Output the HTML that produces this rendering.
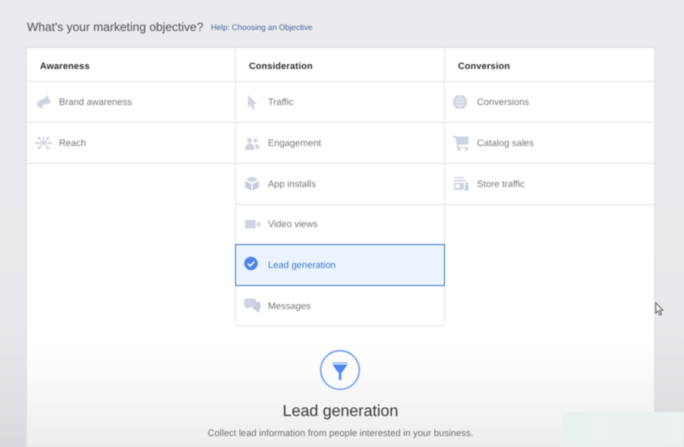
<!DOCTYPE html>
<html>
<head>
<meta charset="utf-8">
<style>
html,body{margin:0;padding:0}
body{width:684px;height:447px;overflow:hidden;position:relative;background:linear-gradient(180deg,#e9ebee 0,#e8e9ec 320px,#d9dadd 447px);font-family:"Liberation Sans",sans-serif;text-rendering:geometricPrecision}
#wrap{position:absolute;left:0;top:0;width:684px;height:447px;filter:blur(.45px)}
.a{position:absolute;white-space:nowrap}
#card{position:absolute;left:27px;top:48px;width:627px;height:399px;background:#fff;box-shadow:0 0 0 1px #dfe0e3}
#fade{position:absolute;left:27px;top:345px;width:627px;height:102px;background:linear-gradient(180deg,#fff 0,#eeeeee 100%)}
.h{background:#e6e7ea;position:absolute}
.t{font-size:9.4px;color:#75777c;line-height:14px}
.b{font-size:9.2px;font-weight:bold;color:#2b2d31;line-height:14px;letter-spacing:.15px}
svg{position:absolute;overflow:visible}
</style>
</head>
<body>
<div id="wrap">
<div class="a" style="left:27px;top:18px;font-size:12px;line-height:18px;color:#4b4f56">What's your marketing objective?</div>
<div class="a" style="left:211px;top:21px;font-size:8px;line-height:14px;color:#4a609c">Help: Choosing an Objective</div>

<div id="card"></div>
<div id="fade"></div>

<div class="h" style="left:27px;top:81px;width:627px;height:1px"></div>
<div class="h" style="left:27px;top:122px;width:627px;height:1px"></div>
<div class="h" style="left:27px;top:163px;width:627px;height:1px"></div>
<div class="h" style="left:235px;top:204px;width:419px;height:1px"></div>
<div class="h" style="left:235px;top:325px;width:210px;height:1px"></div>
<div class="h" style="left:235px;top:48px;width:1px;height:278px"></div>
<div class="h" style="left:444px;top:48px;width:1px;height:278px"></div>

<div class="a" style="left:235px;top:244px;width:208px;height:40px;background:#ebf3fc;border:1px solid #3f7cc8"></div>

<div class="a b" style="left:40px;top:58.500px">Awareness</div>
<div class="a b" style="left:249px;top:58.500px">Consideration</div>
<div class="a b" style="left:458px;top:58.500px">Conversion</div>

<div class="a t" style="left:59px;top:95px">Brand awareness</div>
<div class="a t" style="left:59px;top:136px">Reach</div>
<div class="a t" style="left:268px;top:95px">Traffic</div>
<div class="a t" style="left:268px;top:136px">Engagement</div>
<div class="a t" style="left:268px;top:177px">App installs</div>
<div class="a t" style="left:268px;top:217px">Video views</div>
<div class="a t" style="left:268px;top:258px;color:#3b78d0">Lead generation</div>
<div class="a t" style="left:268px;top:299px">Messages</div>
<div class="a t" style="left:477px;top:95px">Conversions</div>
<div class="a t" style="left:477px;top:136px">Catalog sales</div>
<div class="a t" style="left:477px;top:177px">Store traffic</div>

<svg style="left:0;top:0" width="684" height="447" fill="#d0d3e1">
<!-- Brand awareness -->
<path d="M37 102 L45 98 L47.500 95 L51 103.500 L47 104 L42.500 105 L43 107.500 L39.500 108.500 L38.500 106 L37 106Z"/>
<!-- Reach -->
<path d="M43.500 143 L39 138.500 M43.500 143 L48 138.500 M43.500 143 L39 148 M43.500 143 L48 148 M38 143 L49 143 M43.500 143 L43.500 137" fill="none" stroke="#d0d3e1" stroke-width="1.200"/>
<circle cx="43.500" cy="143" r="1.500"/><circle cx="37" cy="143" r="1.400"/><circle cx="50" cy="143" r="1.400"/><circle cx="39" cy="138" r="1.400"/><circle cx="48" cy="138" r="1.400"/><circle cx="39" cy="148" r="1.400"/><circle cx="48" cy="148" r="1.400"/>
<!-- Traffic -->
<path d="M248 95 L257 104 L253 104.500 L255 109 L252.500 109.500 L250.500 105 L248 108Z"/>
<!-- Engagement -->
<circle cx="249.500" cy="140.500" r="2.500"/><circle cx="255.500" cy="140.500" r="2"/>
<path d="M245 150 C245 145 248 143.500 250 143.500 C253 143.500 254.500 145.500 254.500 150Z"/>
<path d="M255.500 144 C258 144 259.500 145.500 259.500 149 L255.800 149 C255.800 147 255.500 145 254.500 144.500Z"/>
<path d="M246 136.500h1.500M249 136.500h1.500M252 136.500h1.500M255 136.500h1.500" stroke="#dcdfe9" stroke-width=".8"/>
<!-- App installs -->
<path d="M252 176.500 L258.500 179.500 L252 182.500 L245.500 179.500Z"/>
<path d="M245 181 L251.300 184 L251.300 190.500 L245 187.500Z" fill="#c6cadb"/>
<path d="M259 181 L252.700 184 L252.700 190.500 L259 187.500Z" fill="#c6cadb"/>
<!-- Video -->
<rect x="245" y="220" width="10.500" height="8.500"/>
<path d="M256 224 L260 221 L260 228 Z"/>
<!-- Messages -->
<rect x="253" y="302" width="7.500" height="8" rx="2.500" fill="#c6cadb"/>
<path d="M254 309 H259 V313 Z" fill="#c6cadb"/>
<rect x="244" y="298.500" width="12.500" height="9" rx="2.800" fill="#d0d3e1"/>
<path d="M246 306 H250 L247 309.500 Z"/>
<!-- Conversions -->
<circle cx="460" cy="102" r="7" fill="#d0d3e1"/>
<g fill="none" stroke="#eef0f6" stroke-width=".7">
<circle cx="460" cy="102" r="6.300" stroke="#b9bed3"/>
<ellipse cx="460" cy="102" rx="3" ry="6.500"/>
<path d="M453.500 102H466.500M454.500 98.500H465.500M454.500 105.500H465.500M460 95.500V108.500"/>
</g>
<!-- Catalog -->
<path d="M453 135.500 L458 136.500 L468.500 136.500 L468.500 144.500 L458 145 L459 147 L468 147 L468 148 L457 148 L455.500 138 L453 137Z"/>
<circle cx="459" cy="149.200" r="1.600"/><circle cx="466.500" cy="149.200" r="1.600"/>
<!-- Store -->
<path d="M454 177 H464 V178.300 H454Z M454 180 H466 V181.500 H454Z"/>
<path fill-rule="evenodd" d="M454 183 H464 V190 H454Z M455.500 184.500 V188 H459.500 V184.500Z"/>
<path d="M465 185 H468.500 V190.500 H465Z" fill="#c6cadb"/>
<circle cx="466.700" cy="183.500" r="1.300" fill="#c6cadb"/>
<!-- check -->
<circle cx="251" cy="263.500" r="6.700" fill="#4c84e6"/>
<path d="M247.800 263.700 L250.200 266 L254.300 261.700" fill="none" stroke="#fff" stroke-width="1.500"/>
<!-- funnel -->
<circle cx="340" cy="370" r="19.300" fill="#fcfcfc" stroke="#5f93e8" stroke-width="1.300"/>
<rect x="332.500" y="362.300" width="15" height="1.300" fill="#8fb2ee"/>
<path d="M332.500 364.500 H347.500 L342 372.500 H338Z" fill="#4c86ee"/>
<rect x="338.700" y="372" width="2.700" height="8" fill="#5b90ee"/>
</svg>

<div class="a" style="left:27px;width:627px;top:402px;text-align:center;font-size:16px;line-height:20px;color:#35373b">Lead generation</div>
<div class="a" style="left:27px;width:627px;top:426px;text-align:center;font-size:9.330px;line-height:14px;color:#6b6d72">Collect lead information from people interested in your business.</div>

<div class="a" style="left:563px;top:412px;width:121px;height:35px;background:linear-gradient(90deg,#e9f2ed 0,#ecf2ef 25%,#edf1f1 100%)"></div>

<!-- cursor -->
<svg style="left:655px;top:302px" width="10" height="15">
<path d="M.7 .7 L.7 11 L3 9 L4.800 13 L6.500 12.200 L4.800 8.500 L7.800 8.200Z" fill="#f4f4f4" stroke="#55575a" stroke-width=".9"/>
</svg>
</div>
</body>
</html>
